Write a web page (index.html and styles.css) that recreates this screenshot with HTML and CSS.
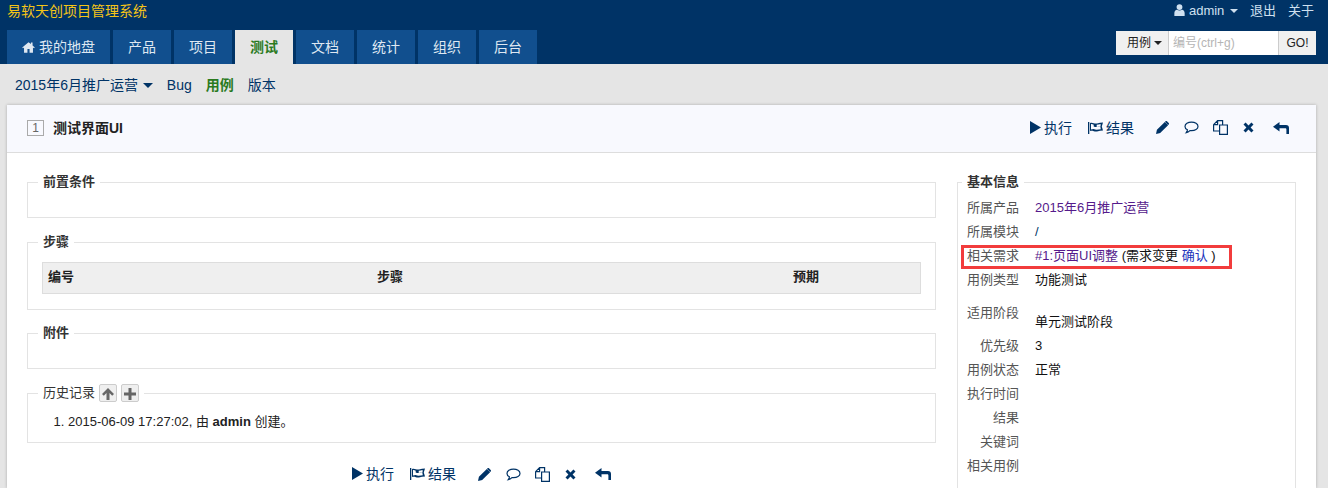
FILE: index.html
```html
<!DOCTYPE html>
<html lang="zh-CN">
<head>
    <meta charset="UTF-8">
    <meta name="viewport" content="width=device-width, initial-scale=1.0">
    <title>测试界面UI</title>
    <link rel="stylesheet" href="styles.css">
</head>
<body>
    <svg class="icon-defs" width="0" height="0">
        <symbol id="i-home" viewBox="0 0 16 14"><path d="M8 1 0.3 7.6l.9 1L2.5 7.5V14h4.2V9.6h2.6V14h4.2V7.5l1.3 1.1.9-1L13 5V1.5h-2v1.7z"/></symbol>
        <symbol id="i-user" viewBox="0 0 12 14"><circle cx="6" cy="3.6" r="3.4"/><path d="M0 14v-3.4C0 8.400 1.500 7 3 6.700 4.700 7.900 7.300 7.900 9 6.700c1.500.3 3 1.700 3 3.900V14z"/></symbol>
        <symbol id="i-play" viewBox="0 0 11 13"><path d="M0 0 11 6.500 0 13z"/></symbol>
        <symbol id="i-flag" viewBox="0 0 15 12"><path d="M0 0h1.300v12H0z"/><path fill-rule="evenodd" d="M2 1C4.500 0 6.500 2 9 1.500 11 1 13 .6 15 .6L13.800 4.500 15 8.400c-2 0-4 .5-6 1C6.500 9.900 4.500 8 2 9zM3 2.100v2.400h2.700V2.800C4.900 2.400 3.900 2 3 2.100zM5.700 4.500V7c1 .5 2 .9 3 .8V5.100c-1 .1-2-.2-3-.6zM8.700 2.800v2.300c1.300-.1 2.600-.5 3.900-.7V1.900c-1.300.2-2.600.6-3.900.9zM3 4.500v3.100c.9-.3 1.800-.5 2.700-.6V4.500zM8.700 5.100v2.700c1.400-.1 2.800-.5 4.100-.6l-.5-2.800z"/></symbol>
        <symbol id="i-pencil" viewBox="0 0 14 14"><path d="M0 14 1 9.500 9.500 1 13 4.500 4.500 13zM10.300.3c.5-.4 1.100-.4 1.500 0l1.900 1.900c.4.4.4 1 0 1.500l-.6.6-3.400-3.400z"/></symbol>
        <symbol id="i-comment" viewBox="0 0 16 14"><path fill="none" stroke="currentColor" stroke-width="1.300" d="M8 1.200c3.800 0 7 1.900 7 4.600S11.800 10.400 8 10.400c-.6 0-1.200 0-1.700-.1-.9.9-2.300 1.900-3.900 2.200.7-.8 1.100-1.800 1.200-3C1.900 8.700 1 7.300 1 5.800 1 3.100 4.200 1.200 8 1.200z"/></symbol>
        <symbol id="i-copy" viewBox="0 0 15 15"><path fill="none" stroke="currentColor" stroke-width="1.200" d="M6.600 5H14.400V14.400H6.600zM.6 4.600 4.600.6H9.600V5M.6 4.600V11H6.600M.6 4.600H4.600V.6"/></symbol>
        <symbol id="i-times" viewBox="0 0 11 11"><path d="M2.600.5 5.500 3.400 8.400.5 10.500 2.600 7.600 5.500l2.900 2.900-2.100 2.100-2.900-2.900-2.900 2.900L.5 8.400l2.900-2.900L.5 2.600z"/></symbol>
        <symbol id="i-reply" viewBox="0 0 16 12"><path d="M6.500 0v3H13c2 0 3 1 3 3v6h-2.600V7.500c0-.8-.4-1.200-1.200-1.200H6.500V9.500L0 4.800z"/></symbol>
        <symbol id="i-up" viewBox="0 0 12 12"><path d="M6 0 12 6l-1.800 1.800-2.700-2.700V12h-3V5.100L1.800 7.800 0 6z"/></symbol>
        <symbol id="i-plus" viewBox="0 0 12 12"><path d="M4.500 0h3v4.500H12v3H7.500V12h-3V7.500H0v-3h4.500z"/></symbol>
    </svg>

    <header class="header">
        <div class="top-row">
            <a class="brand">易软天创项目管理系统</a>
            <div class="top-links">
                <a><svg class="ic ic-user"><use href="#i-user"/></svg> admin <span class="caret"></span></a>
                <a>退出</a>
                <a>关于</a>
            </div>
        </div>
        <div class="nav-row">
            <nav class="main-nav">
                <a class="tab tab-home"><svg class="ic ic-home"><use href="#i-home"/></svg> 我的地盘</a>
                <a class="tab">产品</a>
                <a class="tab">项目</a>
                <a class="tab active">测试</a>
                <a class="tab">文档</a>
                <a class="tab">统计</a>
                <a class="tab">组织</a>
                <a class="tab">后台</a>
            </nav>
            <div class="search">
                <span class="search-type">用例 <span class="caret caret-dark"></span></span>
                <input class="search-input" type="text" placeholder="编号(ctrl+g)">
                <span class="search-go">GO!</span>
            </div>
        </div>
    </header>

    <div class="sub-nav">
        <a>2015年6月推广运营 <span class="caret caret-navy"></span></a>
        <a>Bug</a>
        <a class="current">用例</a>
        <a>版本</a>
    </div>

    <main class="card">
        <div class="card-head">
            <div class="title">
                <span class="id-box">1</span>
                <strong>测试界面UI</strong>
            </div>
            <div class="actions">
                <a><svg class="ic ic-play"><use href="#i-play"/></svg> 执行</a>
                <a><svg class="ic ic-flag"><use href="#i-flag"/></svg> 结果</a>
                <span class="action-icons">
                    <svg class="ic ic-pencil"><use href="#i-pencil"/></svg>
                    <svg class="ic ic-comment"><use href="#i-comment"/></svg>
                    <svg class="ic ic-copy"><use href="#i-copy"/></svg>
                    <svg class="ic ic-times"><use href="#i-times"/></svg>
                    <svg class="ic ic-reply"><use href="#i-reply"/></svg>
                </span>
            </div>
        </div>

        <div class="card-body">
            <div class="col-main">
                <fieldset class="box box-empty">
                    <legend>前置条件</legend>
                </fieldset>
                <fieldset class="box box-steps">
                    <legend>步骤</legend>
                    <div class="steps-head">
                        <span class="step-no">编号</span>
                        <span class="step-desc">步骤</span>
                        <span>预期</span>
                    </div>
                </fieldset>
                <fieldset class="box box-empty">
                    <legend>附件</legend>
                </fieldset>
                <fieldset class="box box-history">
                    <legend>历史记录<span class="mini-btn"><svg class="ic ic-mini"><use href="#i-up"/></svg></span><span class="mini-btn"><svg class="ic ic-mini"><use href="#i-plus"/></svg></span></legend>
                    <ol class="history">
                        <li>2015-06-09 17:27:02, 由 <strong>admin</strong> 创建。</li>
                    </ol>
                </fieldset>
                <div class="actions actions-bottom">
                    <a><svg class="ic ic-play"><use href="#i-play"/></svg> 执行</a>
                    <a><svg class="ic ic-flag"><use href="#i-flag"/></svg> 结果</a>
                    <span class="action-icons">
                        <svg class="ic ic-pencil"><use href="#i-pencil"/></svg>
                        <svg class="ic ic-comment"><use href="#i-comment"/></svg>
                        <svg class="ic ic-copy"><use href="#i-copy"/></svg>
                        <svg class="ic ic-times"><use href="#i-times"/></svg>
                        <svg class="ic ic-reply"><use href="#i-reply"/></svg>
                    </span>
                </div>
            </div>

            <fieldset class="box box-info">
                <legend>基本信息</legend>
                <div class="info-row"><span class="info-label">所属产品</span><span class="visited">2015年6月推广运营</span></div>
                <div class="info-row"><span class="info-label">所属模块</span><span class="link-navy">/</span></div>
                <div class="info-row marked">
                    <span class="info-label">相关需求</span>
                    <span><span class="visited">#1:页面UI调整</span> (需求变更 <span class="link-blue">确认</span> )</span>
                </div>
                <div class="info-row"><span class="info-label">用例类型</span><span>功能测试</span></div>
                <div class="info-row info-tall"><span class="info-label">适用阶段</span><span class="stage">单元测试阶段</span></div>
                <div class="info-row"><span class="info-label">优先级</span><span>3</span></div>
                <div class="info-row"><span class="info-label">用例状态</span><span>正常</span></div>
                <div class="info-row"><span class="info-label">执行时间</span></div>
                <div class="info-row"><span class="info-label">结果</span></div>
                <div class="info-row"><span class="info-label">关键词</span></div>
                <div class="info-row"><span class="info-label">相关用例</span></div>
            </fieldset>
        </div>
    </main>
</body>
</html>
```

FILE: styles.css
```css
html, body {
    height: 488px;
    overflow: hidden;
}
body {
    margin: 0;
    background-color: #e5e5e5;
    color: #222;
    font-family: "Liberation Sans", "Noto Sans CJK SC", sans-serif;
    font-size: 13px;
    line-height: 18px;
}
.icon-defs {
    position: absolute;
}
.ic {
    display: inline-block;
    fill: currentColor;
    vertical-align: -1px;
}

/* header */
.header {
    height: 64px;
    background-color: #003366;
    color: #cfe0f0;
}
.top-row {
    display: flex;
    justify-content: space-between;
    height: 30px;
    padding: 2px 14px 0 7px;
    box-sizing: border-box;
}
.brand {
    color: #f5c518;
    font-size: 14px;
}
.top-links {
    display: flex;
    gap: 12px;
}
.ic-user {
    width: 11px;
    height: 12px;
}
.caret {
    display: inline-block;
    margin-left: 2px;
    border-top: 4px solid #cfe0f0;
    border-left: 4px solid transparent;
    border-right: 4px solid transparent;
    vertical-align: 2px;
}
.caret-dark {
    margin-left: 0;
    border-top-color: #222;
}
.caret-navy {
    margin-left: 1px;
    border-top: 5px solid #003366;
    border-left-width: 5px;
    border-right-width: 5px;
}
.nav-row {
    display: flex;
    justify-content: space-between;
    align-items: flex-start;
    height: 34px;
    padding: 0 12px 0 7px;
}
.main-nav {
    display: flex;
    gap: 3px;
}
.tab {
    width: 58px;
    height: 34px;
    background-color: #114f8e;
    color: #dfe8f2;
    font-size: 14px;
    line-height: 34px;
    text-align: center;
}
.tab-home {
    width: 103px;
}
.tab.active {
    background-color: #e5e5e5;
    color: #2a7a1e;
    font-weight: bold;
}
.ic-home {
    width: 13px;
    height: 12px;
}
.search {
    display: flex;
    height: 24px;
    margin-top: 1px;
    line-height: 24px;
}
.search-type {
    width: 52px;
    box-sizing: border-box;
    padding-left: 11px;
    background-color: #f0f0f0;
    color: #222;
    font-size: 12px;
}
.search-input {
    width: 111px;
    height: 24px;
    box-sizing: border-box;
    padding: 0 4px;
    border: 0;
    border-left: 1px solid #ccc;
    border-right: 1px solid #ccc;
    font-family: inherit;
    font-size: 12px;
}
.search-input::placeholder {
    color: #b5b5b5;
    opacity: 1;
}
.search-go {
    width: 37px;
    background-color: #f0f0f0;
    color: #222;
    font-size: 12px;
    text-align: center;
}

/* sub nav */
.sub-nav {
    display: flex;
    gap: 14px;
    height: 41px;
    padding: 12px 0 0 15px;
    box-sizing: border-box;
    color: #003366;
    font-size: 14px;
}
.sub-nav .current {
    color: #2a7a1e;
    font-weight: bold;
}

/* card */
.card {
    margin: 0 12px 0 7px;
    height: 383px;
    overflow: hidden;
    background-color: #fff;
    box-shadow: 0 0 3px rgba(0,0,0,0.25);
}
.card-head {
    display: flex;
    justify-content: space-between;
    align-items: center;
    height: 45px;
    padding: 0 27px 2px 20px;
    background-color: #f8f9fe;
    border-bottom: 1px solid #ddd;
}
.title {
    display: flex;
    align-items: center;
    gap: 9px;
}
.title strong {
    color: #222;
    font-size: 14px;
}
.id-box {
    width: 15px;
    height: 14px;
    border: 1px solid #aaa;
    color: #666;
    font-size: 12px;
    line-height: 14px;
    text-align: center;
}
.actions {
    display: flex;
    align-items: center;
    color: #003366;
    font-size: 14px;
}
.actions a {
    margin-right: 16px;
    white-space: nowrap;
}
.action-icons {
    display: flex;
    align-items: center;
    margin-left: 6px;
}
.ic-play { width: 11px; height: 13px; margin-right: -1px; }
.ic-flag { width: 15px; height: 12px; margin-right: -1px; }
.ic-pencil { width: 13px; height: 13px; margin-right: 15px; }
.ic-comment { width: 15px; height: 13px; margin-right: 14px; }
.ic-copy { width: 15px; height: 15px; margin-right: 15px; }
.ic-times { width: 11px; height: 11px; margin-right: 19px; }
.ic-reply { width: 16px; height: 12px; }

.card-body {
    display: flex;
    gap: 21px;
    align-items: flex-start;
    padding: 20px 20px 0;
}
.col-main {
    width: 909px;
}
.box {
    margin: 0;
    padding: 0 15px 0 14px;
    border: 1px solid #e3e3e3;
    min-width: 0;
}
.box legend {
    padding: 0 5px;
    margin-left: -4px;
    color: #333;
    font-weight: bold;
    line-height: 18px;
}
.box-empty {
    height: 45px;
    margin-bottom: 15px;
    box-sizing: border-box;
}
.box-steps {
    height: 77px;
    margin-bottom: 14px;
    box-sizing: border-box;
}
.steps-head {
    display: flex;
    width: 879px;
    height: 32px;
    margin-top: 11px;
    box-sizing: border-box;
    padding-left: 5px;
    background-color: #efefef;
    border: 1px solid #ddd;
    font-weight: bold;
    line-height: 27px;
}
.step-no { width: 329px; }
.step-desc { width: 416px; }
.box-history {
    height: 59px;
    box-sizing: border-box;
}
.box-history legend {
    font-weight: normal;
    height: 18px;
}
.mini-btn {
    display: inline-block;
    box-sizing: border-box;
    width: 18px;
    height: 18px;
    margin-left: 4px;
    background-color: #efefef;
    border: 1px solid #ccc;
    border-radius: 2px;
    color: #666;
    line-height: 15px;
    text-align: center;
    vertical-align: top;
}
.ic-mini {
    width: 12px;
    height: 12px;
    vertical-align: middle;
}
.history {
    margin: 11px 0 0;
    padding: 0 0 0 26px;
}
.actions-bottom {
    justify-content: center;
    margin-top: 22px;
}

/* right column */
.box-info {
    width: 339px;
    box-sizing: border-box;
    height: 340px;
    padding: 0 9px;
}
.box-info legend {
    margin-left: -5px;
}
.info-row {
    display: flex;
    gap: 16px;
    height: 24px;
    line-height: 24px;
    color: #111;
}
.info-row:first-of-type {
    margin-top: 5px;
}
.info-label {
    width: 52px;
    flex: none;
    color: #555;
    text-align: right;
}
.info-tall {
    height: 42px;
    padding-top: 9px;
    box-sizing: border-box;
}
.stage {
    margin-top: 9px;
}
.visited { color: #551a8b; }
.link-navy { color: #003366; }
.link-blue { color: #2233bb; }
.marked {
    position: relative;
}
.marked::after {
    content: "";
    position: absolute;
    left: -6px;
    top: 1px;
    width: 265px;
    height: 18px;
    border: 3px solid #f23c3c;
}
```
